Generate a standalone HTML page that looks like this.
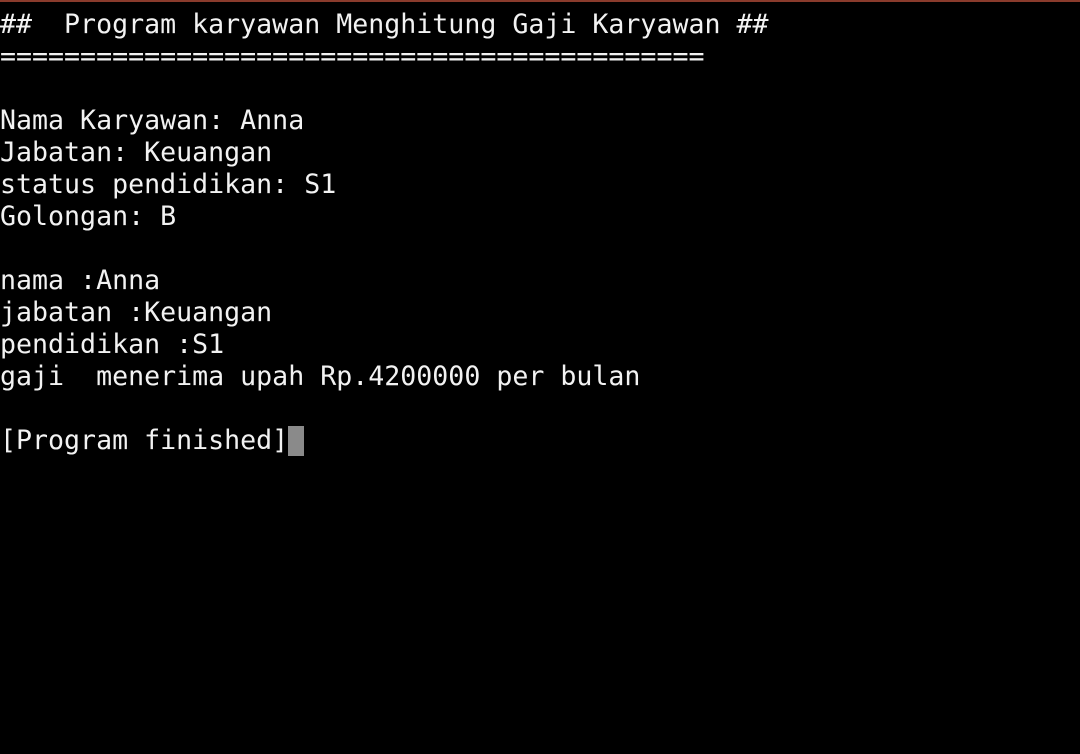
<!DOCTYPE html>
<html><head><style>
html,body{margin:0;padding:0;background:#000;width:1080px;height:754px;overflow:hidden}
.bar{position:absolute;top:0;left:0;width:1080px;height:2px;background:#8a3b2c}
pre{position:absolute;left:0;top:9px;margin:0;color:#f2f2f2;font-family:"DejaVu Sans Mono","Liberation Mono",monospace;font-size:26.6px;line-height:32px;letter-spacing:0}
.cur{display:inline-block;width:16px;height:30px;background:#8a8a8a;vertical-align:-7px}
</style></head><body>
<div class="bar"></div>
<pre>##  Program karyawan Menghitung Gaji Karyawan ##
============================================

Nama Karyawan: Anna
Jabatan: Keuangan
status pendidikan: S1
Golongan: B

nama :Anna
jabatan :Keuangan
pendidikan :S1
gaji  menerima upah Rp.4200000 per bulan

[Program finished]<span class="cur"></span></pre>
</body></html>
